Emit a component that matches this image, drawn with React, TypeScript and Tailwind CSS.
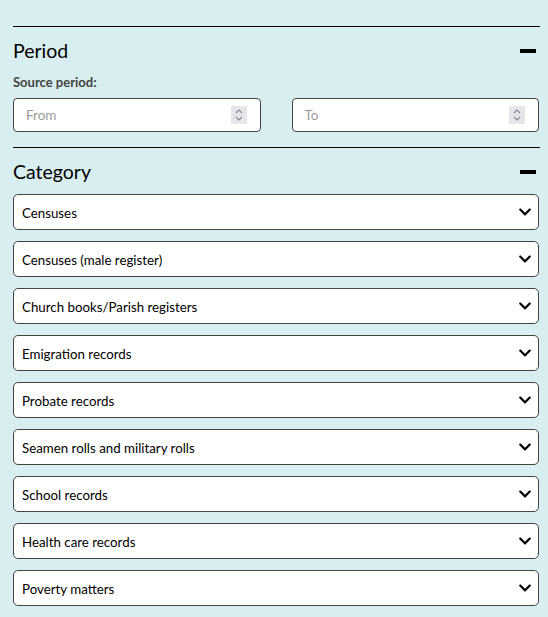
import { FaChevronDown } from 'react-icons/fa';

const categories = [
  'Censuses',
  'Censuses (male register)',
  'Church books/Parish registers',
  'Emigration records',
  'Probate records',
  'Seamen rolls and military rolls',
  'School records',
  'Health care records',
  'Poverty matters',
];

const Minus = () => <span className="block w-4 h-1 bg-black" />;

const Spinner = () => (
  <span className="w-4 h-[18px] bg-[#e6e6ea] flex items-center justify-center">
    <svg width="10" height="14" viewBox="0 0 10 14" fill="none" stroke="#8a8a90" strokeWidth="1.2">
      <path d="M2 5l3-3 3 3" />
      <path d="M2 9l3 3 3-3" />
    </svg>
  </span>
);

const NumberInput = ({ placeholder }: { placeholder: string }) => (
  <div className="h-[34px] bg-white border border-[#444] rounded-[4px] flex items-center pl-3 pr-[13px]">
    <span className="flex-1 text-[13.5px] text-[#9a9a9a]">{placeholder}</span>
    <Spinner />
  </div>
);

export default function App() {
  return (
    <div
      className="min-h-[617px] bg-[#d9eef0] pl-[13px] pr-2 pt-[26px]"
      style={{ fontFamily: 'Lato, "Liberation Sans", sans-serif' }}
    >
      <section className="border-t border-black">
        <div className="flex items-center justify-between pt-[10px] pr-[4px]">
          <h2 className="text-[19.5px] leading-[28px] text-black">Period</h2>
          <Minus />
        </div>
        <p className="text-[13px] leading-[20px] font-bold text-[#444] mt-[7px]">Source period:</p>
        <div className="grid grid-cols-2 gap-[31px] mt-[6px] pr-px">
          <NumberInput placeholder="From" />
          <NumberInput placeholder="To" />
        </div>
      </section>

      <section className="border-t border-black mt-[15px]">
        <div className="flex items-center justify-between pt-[10px] pr-[4px]">
          <h2 className="text-[19.5px] leading-[28px] text-black">Category</h2>
          <Minus />
        </div>
        <div className="flex flex-col gap-[11px] mt-[8px] pr-px">
          {categories.map((c) => (
            <div
              key={c}
              className="h-[36px] bg-white border border-[#444] rounded-[5px] flex items-center justify-between pl-2 pr-[6px]"
            >
              <span className="text-[13.3px] text-black pt-[3px]">{c}</span>
              <FaChevronDown className="w-[14px] h-[14px] text-black" />
            </div>
          ))}
        </div>
      </section>
    </div>
  );
}
